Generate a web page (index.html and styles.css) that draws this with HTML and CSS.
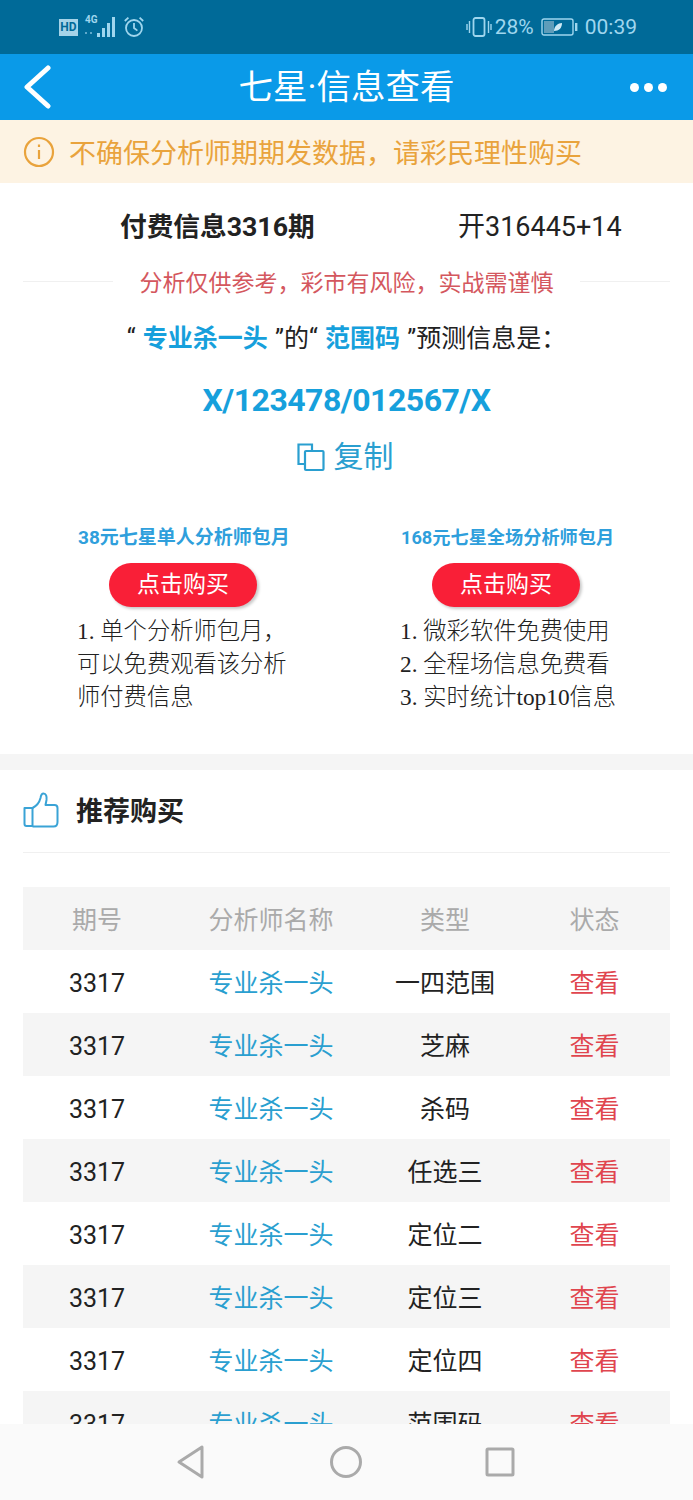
FILE: index.html
```html
<!DOCTYPE html>
<html lang="zh">

<head>
    <meta charset="UTF-8">
    <title>七星·信息查看</title>
    <link rel="stylesheet" href="styles.css">
</head>

<body>
    <!-- 状态栏 -->
    <div class="status">
        <div class="status-left">
            <span class="hd">HD</span>
            <svg class="signal" width="36" height="26" viewBox="0 0 36 26">
                <text x="1" y="9" class="net">4G</text>
                <path d="M1 18h2v2H1zM6 18h2v2H6z" fill="#5fa9cb" />
                <rect x="13" y="19" width="3" height="4" fill="#9fd6ee" />
                <rect x="18" y="14" width="3" height="9" fill="#9fd6ee" />
                <rect x="23" y="9" width="3" height="14" fill="#9fd6ee" />
                <rect x="28" y="3" width="3" height="20" fill="#9fd6ee" />
            </svg>
            <svg width="22" height="24" viewBox="0 0 22 24" fill="none" stroke="#9fd6ee" stroke-width="1.8">
                <circle cx="11" cy="13" r="8" />
                <path d="M11 8v5l3.400 2.600M1.800 6 5.400 2.600M20.200 6 16.600 2.600" />
            </svg>
        </div>
        <div class="status-right">
            <svg width="26" height="22" viewBox="0 0 26 22" fill="none" stroke="#9fd6ee" stroke-width="1.8">
                <rect x="7.500" y="2" width="11" height="18" rx="2" />
                <path d="M3.500 5v12M1 8v6M22.500 5v12M25 8v6" stroke-width="1.400" />
            </svg>
            <span class="percent">28%</span>
            <svg width="37" height="18" viewBox="0 0 37 18">
                <rect x="1" y="1" width="31" height="16" rx="2" fill="none" stroke="#9fd6ee" stroke-width="1.400" />
                <rect x="3" y="3" width="10" height="12" fill="#5f9dba" />
                <path d="M13 13c0-5 4-8 8-8 0 5-3 8-8 8z" fill="#cfeaf5" />
                <rect x="34" y="5" width="2.400" height="8" fill="#9fd6ee" />
            </svg>
            <span class="clock">00:39</span>
        </div>
    </div>

    <!-- 标题栏 -->
    <header class="topbar">
        <svg width="30" height="44" viewBox="0 0 30 44" fill="none" stroke="#fff" stroke-width="5"
            stroke-linecap="round" stroke-linejoin="round">
            <path d="M25 3 4 22l21 19" />
        </svg>
        <h1>七星·信息查看</h1>
        <div class="dots"><i></i><i></i><i></i></div>
    </header>

    <!-- 提示 -->
    <div class="notice">
        <svg width="32" height="32" viewBox="0 0 32 32" fill="none" stroke="#e9a33c" stroke-width="2.200">
            <circle cx="16" cy="16" r="14" />
            <path d="M16 14v9M16 8.500v2.600" />
        </svg>
        <span>不确保分析师期期发数据，请彩民理性购买</span>
    </div>

    <main class="content">
        <section class="info">
            <div class="info-head">
                <span class="issue">付费信息3316期</span>
                <span class="draw">开316445+14</span>
            </div>
            <div class="warn">
                <span class="warn-line"></span>
                <span>分析仅供参考，彩市有风险，实战需谨慎</span>
                <span class="warn-line"></span>
            </div>
            <p class="predict">“ <b>专业杀一头</b> ”的“ <b>范围码</b> ”预测信息是：</p>
            <p class="code">X/123478/012567/X</p>
            <div class="copy">
                <svg width="30" height="30" viewBox="0 0 30 30" fill="none" stroke="#2a9fd0" stroke-width="2.200">
                    <path d="M8 22H2.500V2.500H16V8" />
                    <rect x="9" y="9" width="18.500" height="19" rx="1" />
                </svg>
                <span>复制</span>
            </div>
            <div class="plans">
                <div class="plan">
                    <h3>38元七星单人分析师包月</h3>
                    <a class="buy">点击购买</a>
                    <p>1. 单个分析师包月，<br>可以免费观看该分析<br>师付费信息</p>
                </div>
                <div class="plan plan-all">
                    <h3>168元七星全场分析师包月</h3>
                    <a class="buy">点击购买</a>
                    <p>1. 微彩软件免费使用<br>2. 全程场信息免费看<br>3. 实时统计top10信息</p>
                </div>
            </div>
        </section>

        <section class="recommend">
            <div class="rec-title">
                <svg width="36" height="36" viewBox="0 0 36 36" fill="none" stroke="#3aa3d6" stroke-width="2"
                    stroke-linejoin="round">
                    <path d="M1.500 16h8v18h-6a2 2 0 0 1-2-2z" />
                    <path
                        d="M9.500 16c4-2 7-6 8-10 .4-2.600 1-4.500 3-4.500 2.500 0 3.500 3 3 6.500l-1 5h9c2 0 3 1.500 3 3v14c0 2.500-1.500 4.500-4 4.500H9.500" />
                </svg>
                <h2>推荐购买</h2>
            </div>
            <div class="table">
                <div class="row head"><span>期号</span><span>分析师名称</span><span>类型</span><span>状态</span></div>
                <div class="row"><span>3317</span><span class="name">专业杀一头</span><span>一四范围</span><span class="look">查看</span></div>
                <div class="row"><span>3317</span><span class="name">专业杀一头</span><span>芝麻</span><span class="look">查看</span></div>
                <div class="row"><span>3317</span><span class="name">专业杀一头</span><span>杀码</span><span class="look">查看</span></div>
                <div class="row"><span>3317</span><span class="name">专业杀一头</span><span>任选三</span><span class="look">查看</span></div>
                <div class="row"><span>3317</span><span class="name">专业杀一头</span><span>定位二</span><span class="look">查看</span></div>
                <div class="row"><span>3317</span><span class="name">专业杀一头</span><span>定位三</span><span class="look">查看</span></div>
                <div class="row"><span>3317</span><span class="name">专业杀一头</span><span>定位四</span><span class="look">查看</span></div>
                <div class="row"><span>3317</span><span class="name">专业杀一头</span><span>范围码</span><span class="look">查看</span></div>
            </div>
        </section>
    </main>

    <!-- 底部导航 -->
    <nav class="navbar">
        <svg width="32" height="36" viewBox="0 0 32 36" fill="none" stroke="#aaa" stroke-width="3"
            stroke-linejoin="round">
            <path d="M27 3v30L4 18z" />
        </svg>
        <svg width="34" height="34" viewBox="0 0 34 34" fill="none" stroke="#aaa" stroke-width="3">
            <circle cx="17" cy="17" r="14.500" />
        </svg>
        <svg width="30" height="30" viewBox="0 0 30 30" fill="none" stroke="#aaa" stroke-width="3"
            stroke-linejoin="round">
            <rect x="2" y="2" width="26" height="26" rx="1" />
        </svg>
    </nav>
</body>

</html>
```

FILE: styles.css
```css
* {
    box-sizing: border-box;
    margin: 0;
    padding: 0;
}

body {
    width: 693px;
    height: 1500px;
    overflow: hidden;
    display: flex;
    flex-direction: column;
    background-color: #fff;
    color: #222;
    font-family: "Roboto", "Noto Sans CJK SC", sans-serif;
}

/* 状态栏 */
.status {
    height: 54px;
    flex: none;
    display: flex;
    justify-content: space-between;
    align-items: center;
    padding: 0 56px 0 59px;
    background-color: #006a98;
    color: #9fd6ee;
}

.status-left,
.status-right {
    display: flex;
    align-items: center;
}

.hd {
    width: 19px;
    height: 17px;
    margin-right: 6px;
    background-color: #a5d3e8;
    color: #006a98;
    font-size: 12px;
    font-weight: 700;
    line-height: 17px;
    text-align: center;
}

.signal {
    margin-right: 3px;
}

.net {
    fill: #9fd6ee;
    font-size: 10px;
    font-weight: 700;
    font-family: "Roboto", sans-serif;
}

.percent {
    margin: 0 7px 0 3px;
    font-size: 21px;
}

.clock {
    margin-left: 7px;
    font-size: 21px;
}

/* 标题栏 */
.topbar {
    height: 66px;
    flex: none;
    display: flex;
    justify-content: space-between;
    align-items: center;
    padding: 0 25px 0 23px;
    background-color: #0a9ae8;
    color: #fff;
}

.topbar h1 {
    margin-left: 10px;
    font-size: 34.500px;
    font-weight: 400;
    line-height: 70px;
}

.dots {
    display: flex;
    gap: 5px;
    width: 38px;
}

.dots i {
    width: 9px;
    height: 9px;
    border-radius: 50%;
    background-color: #fff;
}

/* 提示 */
.notice {
    height: 63px;
    flex: none;
    display: flex;
    align-items: center;
    gap: 14px;
    padding-left: 23px;
    background-color: #fdf3e3;
    color: #e9a33c;
    font-size: 27px;
}

.content {
    flex: 1;
    min-height: 0;
    overflow: hidden;
}

/* 付费信息 */
.info {
    padding: 0 0 40px;
    border-bottom: 16px solid #f5f5f5;
}

.info-head {
    height: 82px;
    display: flex;
    align-items: center;
    font-size: 27px;
}

.issue {
    margin-left: 120px;
    width: 338px;
    font-size: 26.700px;
    font-weight: 700;
}

.draw {
    width: 170px;
}

.warn {
    height: 26px;
    margin-top: 3px;
    display: flex;
    align-items: center;
    justify-content: space-between;
    padding: 0 23px;
    color: #d4575e;
    font-size: 23px;
}

.warn-line {
    width: 90px;
    height: 1px;
    background-color: #f0f0f0;
}

.predict {
    margin-top: 27px;
    font-size: 25px;
    line-height: 35px;
    text-align: center;
}

.predict b {
    margin: 0 1px;
    color: #16a0dc;
}

.code {
    margin-top: 24px;
    color: #16a0dc;
    font-size: 32px;
    font-weight: 700;
    letter-spacing: -0.500px;
    line-height: 40px;
    text-align: center;
}

.copy {
    margin-top: 17px;
    display: flex;
    justify-content: center;
    align-items: center;
    gap: 8px;
    padding-right: 4px;
    color: #2a9fd0;
    font-size: 30px;
    line-height: 40px;
}

.plans {
    margin-top: 46px;
    display: grid;
    grid-template-columns: 323px 1fr;
    padding-left: 78px;
}

.plan h3 {
    color: #2f9fdc;
    font-size: 19px;
    font-weight: 700;
    line-height: 30px;
}

.plan-all h3 {
    font-size: 18.200px;
}

.buy {
    display: block;
    width: 148px;
    height: 44px;
    margin: 10px 0 0 31px;
    border-radius: 22px;
    background-color: #f91f37;
    box-shadow: 2px 2px 3px #c9c9c9;
    color: #fff;
    font-size: 23px;
    line-height: 44px;
    text-align: center;
}

.plan p {
    margin: 8px 0 0 -1px;
    font-family: "Liberation Serif", "Noto Sans CJK SC", serif;
    font-size: 23.300px;
    font-weight: 300;
    line-height: 33px;
}

/* 推荐购买 */
.recommend {
    padding: 0 23px;
}

.rec-title {
    height: 83px;
    padding-bottom: 3px;
    display: flex;
    align-items: center;
    gap: 17px;
    border-bottom: 1px solid #f0f0f0;
}

.rec-title h2 {
    font-size: 27px;
    font-weight: 700;
}

.table {
    margin-top: 34px;
}

.row {
    height: 63px;
    padding-top: 3px;
    display: grid;
    grid-template-columns: 148px 200px 148px 151px;
    font-size: 25px;
    line-height: 61px;
    text-align: center;
}

.row:nth-child(odd) {
    background-color: #f5f5f5;
}

.head {
    color: #aaa;
}

.name {
    color: #2a9fd0;
}

.look {
    color: #e0454e;
}

/* 底部导航 */
.navbar {
    height: 76px;
    flex: none;
    display: flex;
    justify-content: center;
    align-items: center;
    gap: 122px;
    padding-right: 4px;
    background-color: #fafafa;
}
```
